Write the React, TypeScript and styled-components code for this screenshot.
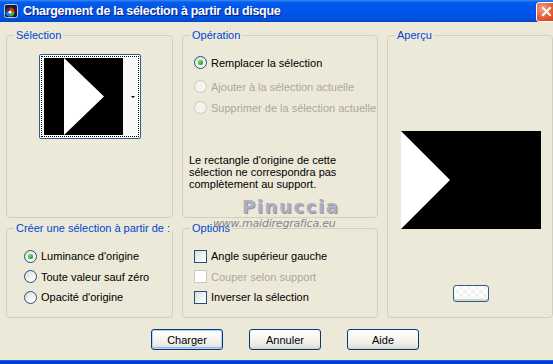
import React from 'react';
import styled, { createGlobalStyle } from 'styled-components';

const GlobalStyle = createGlobalStyle`
  html, body {
    margin: 0;
    padding: 0;
    background: #ece9d8;
  }
  body {
    font-family: "Liberation Sans", Arial, sans-serif;
    font-size: 11px;
    color: #000;
  }
`;

const Window = styled.div`
  position: relative;
  width: 553px;
  height: 364px;
  background: #ece9d8;
  overflow: hidden;
  display: flex;
  flex-direction: column;
`;

const TitleBar = styled.div`
  height: 22px;
  flex: none;
  display: flex;
  align-items: center;
  padding-left: 4px;
  background: linear-gradient(#3a8cf8 0, #0a5ee8 2px, #0058ee 5px, #0055e5 14px, #0050dc 19px, #0046c8 22px);
  overflow: hidden;
`;

const TitleText = styled.div`
  margin-left: 5px;
  color: #fff;
  font-family: "Liberation Sans", Arial, sans-serif;
  font-weight: bold;
  font-size: 12.5px;
  letter-spacing: -0.3px;
  text-shadow: 1px 1px 0 #0a1a80;
  flex: 1;
  white-space: nowrap;
`;

const CloseButton = styled.div`
  width: 21px;
  height: 20px;
  margin-right: -4px;
  margin-top: 1px;
  border: 1px solid #fff;
  border-radius: 3px;
  box-sizing: border-box;
  background: radial-gradient(circle at 30% 30%, #f2a080, #e2552c 60%, #c8401a);
  display: flex;
  align-items: center;
  justify-content: center;
`;

const Body = styled.div`
  flex: 1;
  padding: 7px 0 0 6px;
  display: flex;
  flex-direction: column;
`;

const Grid = styled.div`
  display: grid;
  grid-template-columns: 167px 196px 166px;
  grid-template-rows: 189px 96px;
  column-gap: 9px;
  row-gap: 4px;
`;

const Group = styled.fieldset<{ $span?: boolean }>`
  margin: 0;
  padding: 0;
  min-width: 0;
  border: 1px solid #d0d0bf;
  border-radius: 4px;
  display: flex;
  flex-direction: column;
  grid-row: ${p => (p.$span ? '1 / span 2' : 'auto')};
  grid-column: ${p => (p.$span ? '3' : 'auto')};
  box-sizing: border-box;
`;

const Legend = styled.legend`
  color: #0046d5;
  font-size: 11px;
  line-height: 13px;
  padding: 0 2px;
  margin-left: 7px;
  white-space: nowrap;
`;

const ThumbButton = styled.div`
  align-self: center;
  margin-top: 12px;
  width: 102px;
  height: 85px;
  box-sizing: border-box;
  border: 1px solid #2c5b8e;
  border-radius: 2px;
  background: #fff;
  padding: 1px;
`;

const FocusRing = styled.div`
  width: 100%;
  height: 100%;
  box-sizing: border-box;
  border: 1px dotted #000;
  padding: 1px;
`;

const OptionList = styled.div<{ $top: number }>`
  display: flex;
  flex-direction: column;
  padding-top: ${p => p.$top}px;
`;

const OptionRow = styled.label<{ $indent: number; $gapAfter?: number; $disabled?: boolean; $h?: number }>`
  display: flex;
  align-items: center;
  gap: 4px;
  height: ${p => p.$h ?? 20.5}px;
  padding-left: ${p => p.$indent}px;
  margin-bottom: ${p => p.$gapAfter ?? 0}px;
  color: ${p => (p.$disabled ? '#aca899' : '#000')};
  white-space: nowrap;
`;

const Radio = styled.span<{ $checked?: boolean; $disabled?: boolean }>`
  position: relative;
  width: 13px;
  height: 13px;
  flex: none;
  box-sizing: border-box;
  border-radius: 50%;
  border: 1px solid ${p => (p.$disabled ? '#cac8bb' : '#1c5180')};
  background: ${p =>
    p.$disabled ? '#f4f3ee' : 'linear-gradient(135deg, #dcdcd5 0%, #f6f6f3 60%, #ffffff 100%)'};
  &::after {
    content: '';
    display: ${p => (p.$checked ? 'block' : 'none')};
    position: absolute;
    left: 3px;
    top: 3px;
    width: 5px;
    height: 5px;
    border-radius: 50%;
    background: radial-gradient(circle at 35% 35%, #6fe06f, #21a121 70%);
  }
`;

const Check = styled.span<{ $disabled?: boolean }>`
  width: 13px;
  height: 13px;
  flex: none;
  box-sizing: border-box;
  border: 1px solid ${p => (p.$disabled ? '#cac8bb' : '#1c5180')};
  background: ${p =>
    p.$disabled ? '#ffffff' : 'linear-gradient(135deg, #dcdcd7 0%, #f4f4f1 60%, #ffffff 100%)'};
`;

const Note = styled.p`
  margin: auto 0 0;
  padding: 0 0 27px 6px;
  line-height: 12px;
`;

const Preview = styled.div`
  align-self: center;
  margin-top: 89px;
  margin-left: 1px;
  width: 140px;
  height: 98px;
`;

const SmallButton = styled.div`
  align-self: center;
  margin-top: 56px;
  margin-left: 2px;
  width: 36px;
  height: 17px;
  box-sizing: border-box;
  border: 1px solid #2c5b8e;
  border-radius: 3px;
  background:
    repeating-conic-gradient(#f2f2ee 0 25%, #ffffff 0 50%) 50% 50% / 8px 8px;
  box-shadow: inset 0 -2px 0 #d8d6cc;
`;

const ButtonRow = styled.div`
  display: flex;
  gap: 26px;
  padding-left: 145px;
  margin-top: 11px;
`;

const Button = styled.button<{ $default?: boolean }>`
  width: 72px;
  height: 21px;
  padding: 0;
  box-sizing: border-box;
  font-family: "Liberation Sans", Arial, sans-serif;
  font-size: 11px;
  color: #000;
  border: 1px solid #003c74;
  border-radius: 3px;
  background: linear-gradient(#ffffff 0%, #f5f4ef 50%, #e8e7e0 85%, #d6d0c5 100%);
  box-shadow: ${p =>
    p.$default ? 'inset 0 0 0 1px #b9d1fa, inset 0 -1px 0 1px #9cb6e8' : 'none'};
`;

const BottomEdge = styled.div`
  height: 3px;
  flex: none;
  background: #0040d0;
  border-top: 1px solid #1960e8;
`;

const WatermarkName = styled.div`
  position: absolute;
  left: 242px;
  top: 196px;
  font-family: "DejaVu Sans", sans-serif;
  font-weight: bold;
  font-size: 18px;
  letter-spacing: 1.6px;
  color: #aeaec0;
  text-shadow: 1px 1px 0 #94949f;
  pointer-events: none;
`;

const WatermarkUrl = styled.div`
  position: absolute;
  left: 213px;
  top: 217px;
  font-family: "DejaVu Sans", sans-serif;
  font-style: italic;
  font-size: 11px;
  letter-spacing: -0.2px;
  color: #858590;
  pointer-events: none;
`;

function AppIcon() {
  return (
    <svg width="14" height="14" viewBox="0 0 14 14">
      <rect x="0.5" y="0.5" width="13" height="13" rx="2" fill="#1a1a30" stroke="#c0c8e0" />
      <circle cx="6" cy="8" r="4.5" fill="#3a3a3a" />
      <path d="M6 8 L6 3.5 A4.5 4.5 0 0 1 10.5 8 Z" fill="#e03030" />
      <path d="M6 8 L10.5 8 A4.5 4.5 0 0 1 6 12.5 Z" fill="#30c040" />
      <path d="M6 8 L6 12.5 A4.5 4.5 0 0 1 1.5 8 Z" fill="#3070f0" />
      <circle cx="6" cy="8" r="1.6" fill="#fff" />
    </svg>
  );
}

function Thumbnail() {
  return (
    <svg width="94" height="77" viewBox="0 0 94 77">
      <rect x="0" y="0" width="94" height="77" fill="#f8f8f8" />
      <rect x="1" y="0" width="79" height="77" fill="#000" />
      <polygon points="21,0 61,38.5 21,77" fill="#fff" />
      <polygon points="88,38 92,38 90,40" fill="#000" />
    </svg>
  );
}

function PreviewImage() {
  return (
    <svg width="140" height="98" viewBox="0 0 140 98">
      <rect width="140" height="98" fill="#000" />
      <polygon points="0,0 49,49 0,98" fill="#fff" />
    </svg>
  );
}

export default function App() {
  return (
    <Window>
      <GlobalStyle />
      <TitleBar>
        <AppIcon />
        <TitleText>Chargement de la sélection à partir du disque</TitleText>
        <CloseButton>
          <svg width="11" height="11" viewBox="0 0 11 11">
            <path d="M2 2 L9 9 M9 2 L2 9" stroke="#fff" strokeWidth="2" strokeLinecap="square" />
          </svg>
        </CloseButton>
      </TitleBar>
      <Body>
        <Grid>
          <Group>
            <Legend>Sélection</Legend>
            <ThumbButton>
              <FocusRing>
                <Thumbnail />
              </FocusRing>
            </ThumbButton>
          </Group>
          <Group>
            <Legend>Opération</Legend>
            <OptionList $top={10}>
              <OptionRow $indent={11} $h={21} $gapAfter={3}>
                <Radio $checked />
                Remplacer la sélection
              </OptionRow>
              <OptionRow $indent={11} $h={21} $disabled>
                <Radio $disabled />
                Ajouter à la sélection actuelle
              </OptionRow>
              <OptionRow $indent={11} $h={21} $disabled>
                <Radio $disabled />
                Supprimer de la sélection actuelle
              </OptionRow>
            </OptionList>
            <Note>
              Le rectangle d'origine de cette
              <br />
              sélection ne correspondra pas
              <br />
              complètement au support.
            </Note>
          </Group>
          <Group $span>
            <Legend>Aperçu</Legend>
            <Preview>
              <PreviewImage />
            </Preview>
            <SmallButton />
          </Group>
          <Group>
            <Legend>Créer une sélection à partir de :</Legend>
            <OptionList $top={11}>
              <OptionRow $indent={17}>
                <Radio $checked />
                Luminance d'origine
              </OptionRow>
              <OptionRow $indent={17}>
                <Radio />
                Toute valeur sauf zéro
              </OptionRow>
              <OptionRow $indent={17}>
                <Radio />
                Opacité d'origine
              </OptionRow>
            </OptionList>
          </Group>
          <Group>
            <Legend>Options</Legend>
            <OptionList $top={11}>
              <OptionRow $indent={11}>
                <Check />
                Angle supérieur gauche
              </OptionRow>
              <OptionRow $indent={11} $disabled>
                <Check $disabled />
                Couper selon support
              </OptionRow>
              <OptionRow $indent={11}>
                <Check />
                Inverser la sélection
              </OptionRow>
            </OptionList>
          </Group>
        </Grid>
        <ButtonRow>
          <Button $default>Charger</Button>
          <Button>Annuler</Button>
          <Button>Aide</Button>
        </ButtonRow>
      </Body>
      <BottomEdge />
      <WatermarkName>Pinuccia</WatermarkName>
      <WatermarkUrl>www.maidiregrafica.eu</WatermarkUrl>
    </Window>
  );
}
